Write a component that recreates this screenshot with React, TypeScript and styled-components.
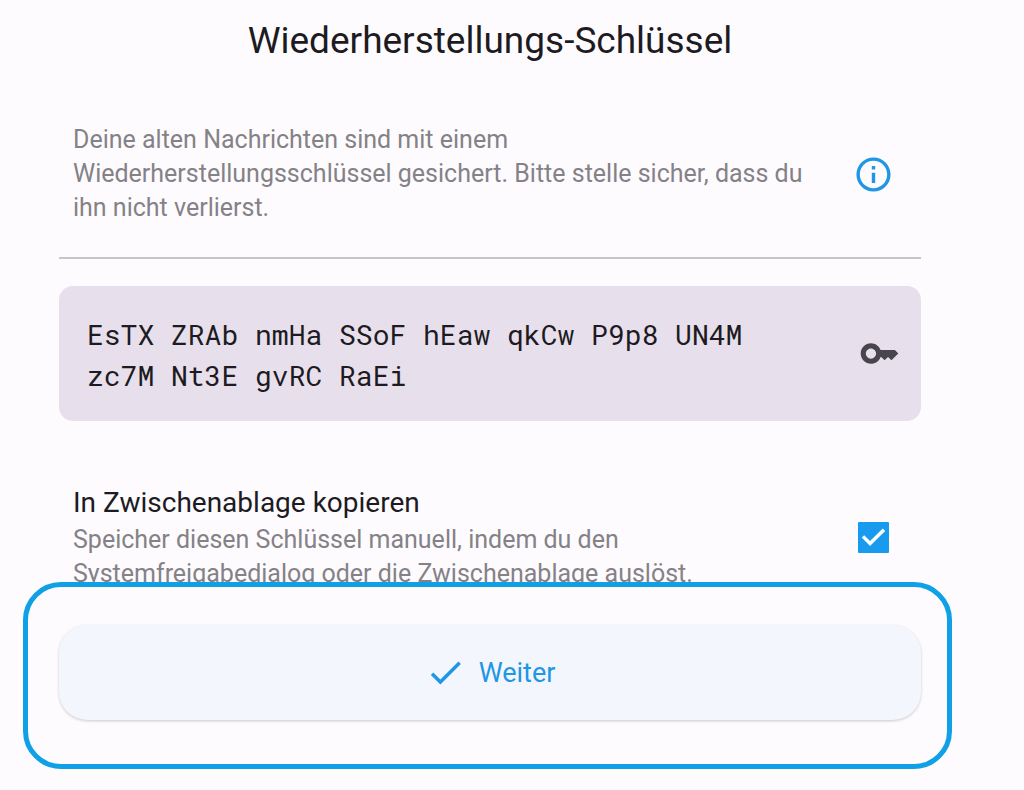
import React, { useState } from "react";
import styled, { createGlobalStyle } from "styled-components";

const GlobalStyle = createGlobalStyle`
  *, *::before, *::after { box-sizing: border-box; }
  body {
    margin: 0;
    background: #fefbff;
    color: #1d1b1f;
    font-family: Roboto, "Liberation Sans", sans-serif;
  }
`;

const Page = styled.main`
  display: flex;
  flex-direction: column;
  height: 100vh;
  padding: 0 72px 21px 23px;
`;

const Title = styled.h1`
  flex: none;
  margin: 0;
  padding: 0 31px 0 36px;
  font-size: 37px;
  font-weight: 400;
  line-height: 82px;
  text-align: center;
`;

const Content = styled.div`
  flex: 1;
  min-height: 0;
  overflow: hidden;
  padding: 41px 31px 0 36px;
`;

const Tile = styled.div`
  display: flex;
  align-items: center;
  justify-content: space-between;
  gap: 28px;
  padding: 0 28px 0 14px;
`;

const TileText = styled.div`
  flex: 1;
  min-width: 0;
`;

const TileTitle = styled.label`
  display: block;
  font-size: 28px;
  line-height: 40px;
`;

const Description = styled.p`
  margin: 0;
  color: #848286;
  font-size: 25px;
  line-height: 34px;
`;

const Divider = styled.hr`
  height: 2px;
  margin: 32px 0 27px;
  border: 0;
  background: #c8c5ca;
`;

const KeyField = styled.div`
  display: flex;
  align-items: center;
  gap: 40px;
  margin-bottom: 62px;
  padding: 24px 21px 24px 28px;
  border-radius: 14px;
  background: #e7e0ec;
  color: #49454f;
`;

const KeyText = styled.textarea`
  flex: 1;
  min-width: 0;
  height: 87px;
  padding: 4px 0 0;
  border: 0;
  outline: 0;
  resize: none;
  overflow: hidden;
  background: transparent;
  color: #1d1b1f;
  font-family: "Roboto Mono", "Liberation Mono", monospace;
  font-size: 28px;
  line-height: 41px;
`;

const Icon = styled.svg<{ $size: number }>`
  display: block;
  flex: none;
  width: ${(p) => p.$size}px;
  height: ${(p) => p.$size}px;
  fill: currentColor;
`;

const InfoMark = styled.span`
  flex: none;
  margin-right: -1px;
  color: #1f97e4;
`;

const CheckControl = styled.span`
  display: grid;
  flex: none;
  margin-right: 4px;
  & > * { grid-area: 1 / 1; place-self: center; }
  svg { color: #fff; pointer-events: none; }
`;

const Checkbox = styled.input`
  appearance: none;
  width: 31px;
  height: 31px;
  margin: 0;
  border: 3px solid #189aef;
  border-radius: 1px;
  cursor: pointer;
  &:checked { background: #189aef; }
`;

const ActionArea = styled.footer`
  flex: none;
  padding: 38px 26px 44px 31px;
  border: 5px solid #0fa0e6;
  border-radius: 38px;
`;

const NextButton = styled.button`
  display: flex;
  align-items: center;
  justify-content: center;
  gap: 13px;
  width: 100%;
  height: 95px;
  padding: 0;
  border: 0;
  border-radius: 28px;
  background: #f4f6fd;
  box-shadow: 0 1px 3px rgba(0, 0, 0, 0.2);
  color: #1f97e4;
  font: 400 27px/34px Roboto, "Liberation Sans", sans-serif;
  cursor: pointer;
`;

export default function App() {
  const [copy, setCopy] = useState(true);
  return (
    <>
      <GlobalStyle />
      <Page>
        <Title>Wiederherstellungs-Schlüssel</Title>
        <Content>
          <Tile>
            <TileText>
              <Description>
                Deine alten Nachrichten sind mit einem Wiederherstellungsschlüssel gesichert. Bitte stelle sicher, dass du ihn nicht verlierst.
              </Description>
            </TileText>
            <InfoMark>
              <Icon $size={41} viewBox="0 0 24 24" aria-hidden="true">
                <path d="M11 7h2v2h-2zm0 4h2v6h-2zm1-9C6.48 2 2 6.48 2 12s4.48 10 10 10 10-4.48 10-10S17.52 2 12 2m0 18c-4.41 0-8-3.59-8-8s3.59-8 8-8 8 3.59 8 8-3.59 8-8 8" />
              </Icon>
            </InfoMark>
          </Tile>
          <Divider />
          <KeyField>
            <KeyText
              readOnly
              rows={2}
              spellCheck={false}
              aria-label="Wiederherstellungs-Schlüssel"
              value="EsTX ZRAb nmHa SSoF hEaw qkCw P9p8 UN4M zc7M Nt3E gvRC RaEi"
            />
            <Icon $size={41} viewBox="0 0 24 24" aria-hidden="true">
              <path d="M21 10h-8.35C11.83 7.67 9.61 6 7 6c-3.31 0-6 2.69-6 6s2.69 6 6 6c2.61 0 4.83-1.67 5.65-4H13l2 2 2-2 2 2 4-4.04zM7 15c-1.65 0-3-1.35-3-3s1.35-3 3-3 3 1.35 3 3-1.35 3-3 3" />
            </Icon>
          </KeyField>
          <Tile>
            <TileText>
              <TileTitle htmlFor="copy-key">In Zwischenablage kopieren</TileTitle>
              <Description>
                Speicher diesen Schlüssel manuell, indem du den Systemfreigabedialog oder die Zwischenablage auslöst.
              </Description>
            </TileText>
            <CheckControl>
              <Checkbox
                id="copy-key"
                type="checkbox"
                checked={copy}
                onChange={(e) => setCopy(e.target.checked)}
              />
              {copy && (
                <Icon $size={31} viewBox="0 0 31 31" aria-hidden="true">
                  <path d="M12 24 3.800 15.600 6.200 13.200 12 19 24.800 6.600 27.200 9z" />
                </Icon>
              )}
            </CheckControl>
          </Tile>
        </Content>
        <ActionArea>
          <NextButton type="button">
            <Icon $size={41} viewBox="0 0 24 24" aria-hidden="true">
              <path d="M9 16.17 4.83 12l-1.42 1.41L9 19 21 7l-1.41-1.41z" />
            </Icon>
            Weiter
          </NextButton>
        </ActionArea>
      </Page>
    </>
  );
}
